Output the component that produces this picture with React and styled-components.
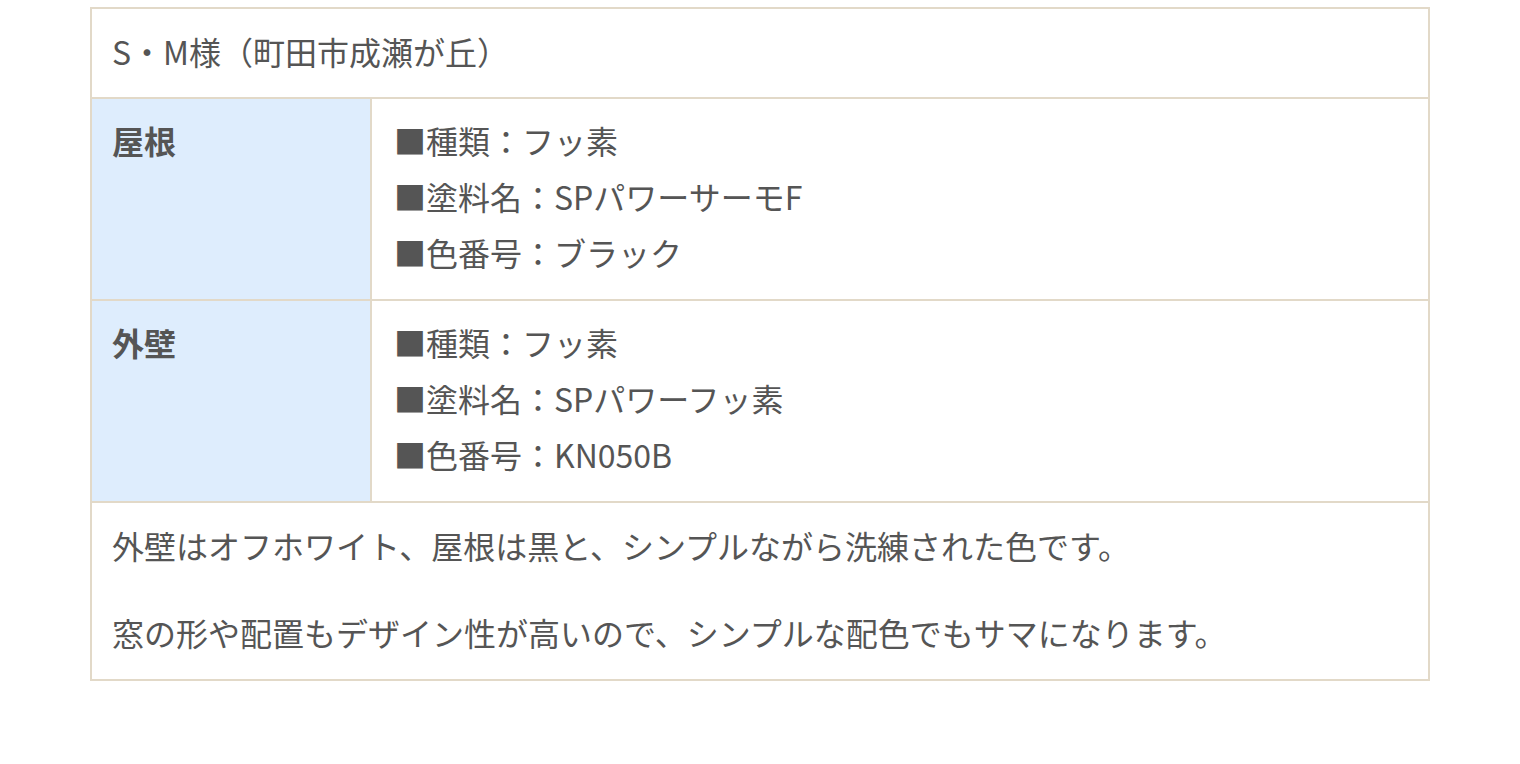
import React from "react";
import styled, { createGlobalStyle } from "styled-components";

const GlobalStyle = createGlobalStyle`
  body {
    margin: 0;
    background: #fff;
    font-family: "Noto Sans CJK JP", "Noto Sans", sans-serif;
    color: #555;
  }
`;

const Table = styled.div`
  box-sizing: border-box;
  width: 1340px;
  margin: 7px auto 0;
  border: 2px solid #e2d9c8;
  font-size: 32px;
  line-height: 56px;
`;

const Title = styled.div`
  padding: 14px 20px 18px;
  border-bottom: 2px solid #e2d9c8;
`;

const Row = styled.div`
  display: grid;
  grid-template-columns: 280px 1fr;
  border-bottom: 2px solid #e2d9c8;
`;

const Label = styled.div`
  box-sizing: border-box;
  padding: 13px 20px 19px;
  background: #deedfd;
  border-right: 2px solid #e2d9c8;
  font-weight: 700;
`;

const Spec = styled.div`
  padding: 13px 22px 19px;
`;

const Line = styled.div``;

const Note = styled.div`
  padding: 14px 20px 19px;
`;

const Para = styled.p`
  margin: 0 0 ${(p) => (p.last ? 0 : 31)}px;
`;

const rows = [
  { label: "屋根", items: ["■種類：フッ素", "■塗料名：SPパワーサーモF", "■色番号：ブラック"] },
  { label: "外壁", items: ["■種類：フッ素", "■塗料名：SPパワーフッ素", "■色番号：KN050B"] },
];

export default function App() {
  return (
    <>
      <GlobalStyle />
      <Table>
        <Title>S・M様（町田市成瀬が丘）</Title>
        {rows.map((r) => (
          <Row key={r.label}>
            <Label>{r.label}</Label>
            <Spec>
              {r.items.map((t) => (
                <Line key={t}>{t}</Line>
              ))}
            </Spec>
          </Row>
        ))}
        <Note>
          <Para>外壁はオフホワイト、屋根は黒と、シンプルながら洗練された色です。</Para>
          <Para last>窓の形や配置もデザイン性が高いので、シンプルな配色でもサマになります。</Para>
        </Note>
      </Table>
    </>
  );
}
